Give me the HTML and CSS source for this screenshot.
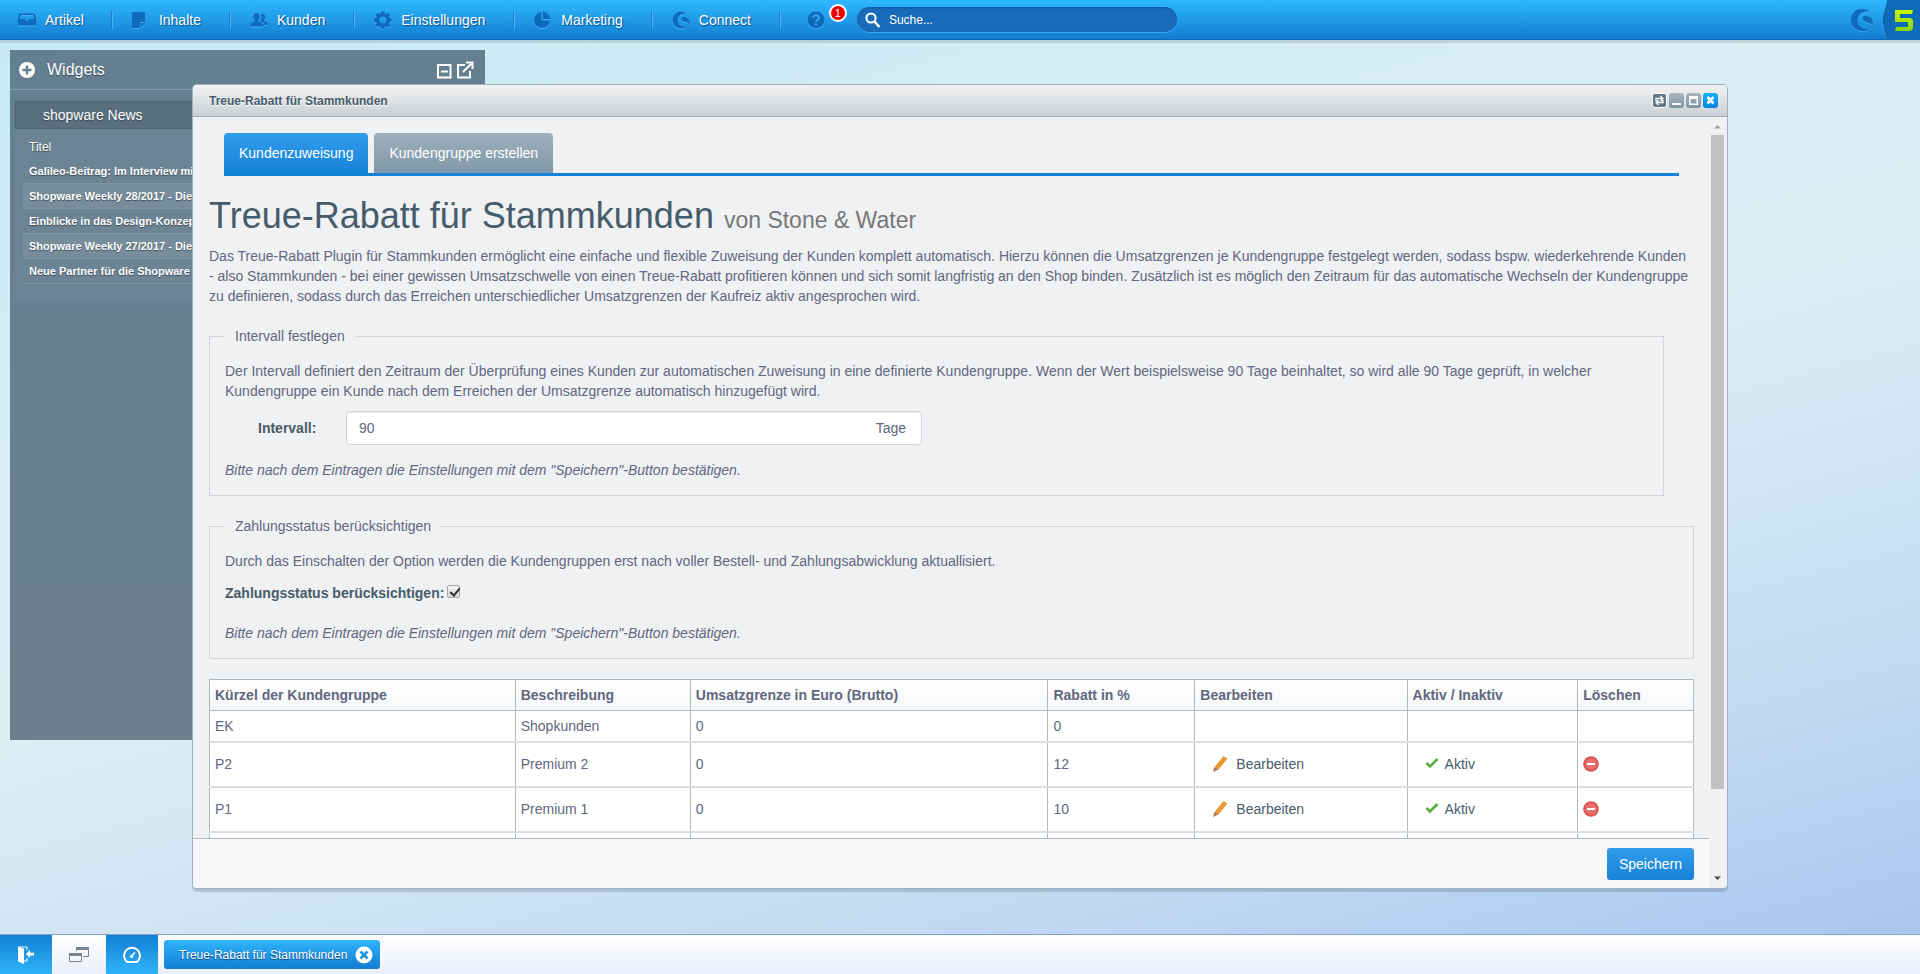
FILE: index.html
```html
<!DOCTYPE html>
<html lang="de">
<head>
<meta charset="utf-8">
<title>Treue-Rabatt für Stammkunden</title>
<link rel="stylesheet" href="styles.css">
</head>
<body>
<header class="topbar">
  <nav class="menu" aria-label="Hauptmenü">
    <a class="menu-item" href="#artikel">
      <svg class="menu-icon" viewBox="0 0 18 18"><path d="M2.500 2.500h13q1.500 0 2 2L18 9v5.500H0V9l.5-4.500q.5-2 2-2zM2.800 4L2 8h4.200q.8 0 1 1t1 1h1.600q.8 0 1-1t1-1H16l-.8-4z" fill-rule="evenodd"/></svg>
      <span>Artikel</span></a>
    <a class="menu-item" href="#inhalte">
      <svg class="menu-icon" viewBox="0 0 18 18"><path d="M0 1h13v10H8v6H0z"/><path d="M9 12h4l-4 4.500z"/></svg>
      <span>Inhalte</span></a>
    <a class="menu-item" href="#kunden">
      <svg class="menu-icon" viewBox="0 0 18 18"><path d="M6.500 2c2 0 3.200 1.500 3.200 3.700 0 1.500-.6 2.600-1.400 3.400v1.400l4.200 1.900c.6.300.9.800.9 1.600v1.500H0V14c0-.8.300-1.300.9-1.600l3.800-1.900V9.100C3.900 8.300 3.300 7.200 3.300 5.700 3.300 3.500 4.500 2 6.500 2z"/><path d="M12.500 3c1.800 0 2.800 1.200 2.800 3 0 1.300-.5 2.200-1.200 2.900v1.200l3 1.500c.6.300.9.700.9 1.400v1h-3.300c-.1-1.200-.6-1.900-1.600-2.300l-2.500-1.200V9.400c.6-.9.900-2.100.9-3.500 0-1.100-.2-1.900-.5-2.600.4-.2.900-.3 1.500-.3z"/></svg>
      <span>Kunden</span></a>
    <a class="menu-item" href="#einstellungen">
      <svg class="menu-icon" viewBox="0 0 18 18"><path fill-rule="evenodd" d="M7.200.5h3.300l.4 2 1.200.5 1.800-1.200 2.300 2.300L15 5.900l.5 1.200 2 .4v3.200l-2 .4-.5 1.200 1.200 1.800-2.300 2.300-1.800-1.200-1.200.5-.4 2H7.200l-.4-2-1.200-.5-1.800 1.200-2.300-2.300 1.200-1.800-.5-1.200-2-.4V7.500l2-.4.500-1.200-1.200-1.800 2.300-2.300L5.600 3l1.200-.5zM8.900 5.700a3.400 3.400 0 100 6.800 3.400 3.400 0 000-6.800z"/></svg>
      <span>Einstellungen</span></a>
    <a class="menu-item" href="#marketing">
      <svg class="menu-icon" viewBox="0 0 18 18"><path d="M7.500 1v8.500H16A8 8 0 117.500 1z"/><path d="M9 .8A7.600 7.600 0 0116.300 8H9z"/></svg>
      <span>Marketing</span></a>
    <a class="menu-item" href="#connect">
      <svg class="menu-icon" viewBox="0 0 24 24"><path d="M20 3.500C17 1.300 14 .8 11 1 5 1.500 1 6 1 12s5 11.200 11.500 11.200c2.400 0 4.600-.6 6.500-2-6 1-11.500-2.700-11.500-8.600C7.500 6.500 13 2.500 20 3.500z"/><path d="M13 8.500c4-1.500 10 .5 10 7v2c-1.500-2-3.500-2.300-5.500-3-3-1-6-2.500-4.500-6z"/></svg>
      <span>Connect</span></a>
    <a class="menu-item menu-help" href="#hilfe" aria-label="Hilfe">
      <svg class="menu-icon" viewBox="0 0 18 18"><circle cx="9" cy="9" r="8.500"/><path d="M6 6.800C6 3.500 12 3.600 12 6.800c0 2-3 2.200-3 4.200M9 12.500v2" fill="none" stroke="#38a5ea" stroke-width="2"/></svg>
      <span class="badge">1</span></a>
  </nav>
  <label class="search">
    <svg class="search-icon" viewBox="0 0 16 16"><circle cx="6" cy="6" r="4.600" fill="none" stroke="currentColor" stroke-width="2"/><path d="M9.500 9.500l5 5.500" stroke="currentColor" stroke-width="2.400"/></svg>
    <input class="search-input" type="text" placeholder="Suche..." aria-label="Suche">
  </label>
  <div class="brand">
    <svg class="brand-mark" viewBox="0 0 24 24"><path d="M20 3.500C17 1.300 14 .8 11 1 5 1.500 1 6 1 12s5 11.200 11.500 11.200c2.400 0 4.600-.6 6.500-2-6 1-11.500-2.700-11.500-8.600C7.500 6.500 13 2.500 20 3.500z"/><path d="M13 8.500c4-1.500 10 .5 10 7v2c-1.500-2-3.500-2.300-5.500-3-3-1-6-2.500-4.500-6z"/></svg>
    <svg class="brand-version" viewBox="0 0 37 39" role="img" aria-label="Version 5">
      <defs><linearGradient id="lime" x1="0" y1="0" x2="0" y2="1"><stop offset="0" stop-color="#c8fb00"/><stop offset="1" stop-color="#86d400"/></linearGradient></defs>
      <path d="M5 0h32v39H5L0 20z" fill="#0f6ab8"/><path d="M5 0L0 20l5 19" fill="none" stroke="#0b5aa3"/>
      <path d="M12 10h18l-1 4H17v4h9q4 0 4 3v6q0 4-4 4H12l1-4h12v-5H12z" fill="url(#lime)"/>
    </svg>
  </div>
</header>

<main class="desktop">
  <aside class="widgets">
    <div class="widgets-head">
      <button class="plain" type="button" aria-label="Widget hinzufügen"><svg class="icon-16" viewBox="0 0 16 16"><circle cx="8" cy="8" r="8" fill="#fff"/><path d="M8 3.500v9M3.500 8h9" stroke="#647f8f" stroke-width="2.400"/></svg></button>
      <h2 class="widgets-title">Widgets</h2>
      <button class="plain" type="button" aria-label="Minimieren"><svg class="icon-tool" viewBox="0 0 18 18"><path d="M3 4h12.500v12.500H3zM6 10.500h7" fill="none" stroke="#fff" stroke-width="2"/></svg></button>
      <button class="plain" type="button" aria-label="Lösen"><svg class="icon-tool" viewBox="0 0 18 18"><path d="M9 4H2v12.500h12V10M7 11l8-8M10 1.500h6.500V8" fill="none" stroke="#fff" stroke-width="2"/></svg></button>
    </div>
    <section class="news">
      <h3 class="news-title">shopware News</h3>
      <div class="news-body">
        <div class="news-label">Titel</div>
        <ul class="news-list">
          <li>Galileo-Beitrag: Im Interview mit</li>
          <li>Shopware Weekly 28/2017 - Die</li>
          <li>Einblicke in das Design-Konzept</li>
          <li>Shopware Weekly 27/2017 - Die</li>
          <li>Neue Partner für die Shopware</li>
        </ul>
      </div>
    </section>
  </aside>

  <section class="window">
    <div class="window-head">
      <h2 class="window-title">Treue-Rabatt für Stammkunden</h2>
      <button class="tool tool-refresh" type="button" aria-label="Neu laden"><svg viewBox="0 0 13 13"><path d="M3 7V4.500h6M7.500 2l2.500 2.500L7.500 7M10 6v2.500H4M5.500 6L3 8.500 5.500 11" fill="none" stroke="#fff" stroke-width="1.300"/></svg></button>
      <button class="tool" type="button" aria-label="Minimieren"><svg viewBox="0 0 15 15"><path d="M3 10h9v2H3z" fill="#fff"/></svg></button>
      <button class="tool" type="button" aria-label="Maximieren"><svg viewBox="0 0 15 15"><path d="M3 3h9v9H3zM4.500 6v4.500h6V6z" fill="#fff" fill-rule="evenodd"/></svg></button>
      <button class="tool tool-close" type="button" aria-label="Schließen"><svg viewBox="0 0 15 15"><path d="M4.500 4l6 6.500M10.500 4l-6 6.500" stroke="#fff" stroke-width="2.600"/></svg></button>
    </div>
    <div class="window-body">
      <div class="pane">
        <div class="content">
          <nav class="tabs">
            <a class="tab tab-active" href="#zuweisung">Kundenzuweisung</a>
            <a class="tab" href="#gruppe">Kundengruppe erstellen</a>
          </nav>
          <h1 class="headline">Treue-Rabatt für Stammkunden <small>von Stone &amp; Water</small></h1>
          <p class="text">Das Treue-Rabatt Plugin für Stammkunden ermöglicht eine einfache und flexible Zuweisung der Kunden komplett automatisch. Hierzu können die Umsatzgrenzen je Kundengruppe festgelegt werden, sodass bspw. wiederkehrende Kunden - also Stammkunden - bei einer gewissen Umsatzschwelle von einen Treue-Rabatt profitieren können und sich somit langfristig an den Shop binden. Zusätzlich ist es möglich den Zeitraum für das automatische Wechseln der Kundengruppe zu definieren, sodass durch das Erreichen unterschiedlicher Umsatzgrenzen der Kaufreiz aktiv angesprochen wird.</p>

          <fieldset class="group group-narrow">
            <legend>Intervall festlegen</legend>
            <p class="text">Der Intervall definiert den Zeitraum der Überprüfung eines Kunden zur automatischen Zuweisung in eine definierte Kundengruppe. Wenn der Wert beispielsweise 90 Tage beinhaltet, so wird alle 90 Tage geprüft, in welcher Kundengruppe ein Kunde nach dem Erreichen der Umsatzgrenze automatisch hinzugefügt wird.</p>
            <div class="interval">
              <label class="strong interval-label" for="interval">Intervall:</label>
              <div class="interval-box">
                <input class="interval-input" id="interval" type="text" value="90">
                <span class="interval-unit">Tage</span>
              </div>
            </div>
            <p class="text hint">Bitte nach dem Eintragen die Einstellungen mit dem "Speichern"-Button bestätigen.</p>
          </fieldset>

          <fieldset class="group">
            <legend>Zahlungsstatus berücksichtigen</legend>
            <p class="text">Durch das Einschalten der Option werden die Kundengruppen erst nach voller Bestell- und Zahlungsabwicklung aktuallisiert.</p>
            <div class="status">
              <label class="strong" for="status">Zahlungsstatus berücksichtigen:</label>
              <input class="check" id="status" type="checkbox" checked>
            </div>
            <p class="text hint">Bitte nach dem Eintragen die Einstellungen mit dem "Speichern"-Button bestätigen.</p>
          </fieldset>

          <table class="grid">
            <colgroup><col class="c-key"><col class="c-desc"><col class="c-limit"><col class="c-rate"><col class="c-edit"><col class="c-active"><col class="c-del"></colgroup>
            <thead>
              <tr><th>Kürzel der Kundengruppe</th><th>Beschreibung</th><th>Umsatzgrenze in Euro (Brutto)</th><th>Rabatt in %</th><th>Bearbeiten</th><th>Aktiv / Inaktiv</th><th>Löschen</th></tr>
            </thead>
            <tbody>
              <tr><td>EK</td><td>Shopkunden</td><td>0</td><td>0</td><td></td><td></td><td></td></tr>
              <tr class="tall"><td>P2</td><td>Premium 2</td><td>0</td><td>12</td>
                <td><button class="action" type="button"><svg class="icon-16" viewBox="0 0 16 16"><path d="M11.500 0l4 2.500-9 11-4-2.500z" fill="#eb9a33"/><path d="M2.500 11l4 2.500L1 16z" fill="#a8745c"/></svg><span>Bearbeiten</span></button></td>
                <td><button class="action action-check" type="button"><svg class="icon-14" viewBox="0 0 14 14"><path d="M1.500 6l3.500 3.500L12.500 2" fill="none" stroke="#53b03c" stroke-width="2.600"/></svg><span>Aktiv</span></button></td>
                <td><button class="plain delete" type="button" aria-label="Löschen"><svg class="icon-16" viewBox="0 0 16 16"><circle cx="8" cy="8" r="7.800" fill="#dd5553"/><circle cx="8" cy="8" r="5.800" fill="#e8706e"/><path d="M4 7h8v2H4z" fill="#fff"/></svg></button></td></tr>
              <tr class="tall"><td>P1</td><td>Premium 1</td><td>0</td><td>10</td>
                <td><button class="action" type="button"><svg class="icon-16" viewBox="0 0 16 16"><path d="M11.500 0l4 2.500-9 11-4-2.500z" fill="#eb9a33"/><path d="M2.500 11l4 2.500L1 16z" fill="#a8745c"/></svg><span>Bearbeiten</span></button></td>
                <td><button class="action action-check" type="button"><svg class="icon-14" viewBox="0 0 14 14"><path d="M1.500 6l3.500 3.500L12.500 2" fill="none" stroke="#53b03c" stroke-width="2.600"/></svg><span>Aktiv</span></button></td>
                <td><button class="plain delete" type="button" aria-label="Löschen"><svg class="icon-16" viewBox="0 0 16 16"><circle cx="8" cy="8" r="7.800" fill="#dd5553"/><circle cx="8" cy="8" r="5.800" fill="#e8706e"/><path d="M4 7h8v2H4z" fill="#fff"/></svg></button></td></tr>
              <tr class="tall"><td></td><td></td><td></td><td></td><td></td><td></td><td></td></tr>
            </tbody>
          </table>
        </div>
        <div class="footer"><button class="save" type="button">Speichern</button></div>
      </div>
      <div class="scrollbar">
        <svg class="scroll-arrow" viewBox="0 0 17 17"><path d="M5 10.500h7L8.500 7z" fill="#a3a3a3"/></svg>
        <div class="scroll-track"><div class="scroll-thumb"></div></div>
        <svg class="scroll-arrow" viewBox="0 0 17 17"><path d="M5 6.500h7L8.500 10z" fill="#505050"/></svg>
      </div>
    </div>
  </section>
</main>

<footer class="taskbar">
  <button class="dock dock-blue" type="button" aria-label="Abmelden"><svg class="icon-18" viewBox="0 0 18 18"><path d="M1 1h9v3M10 12v3H6" fill="none" stroke="#fff"/><path d="M1 1l6 1.500V18l-6-2.500zM9 8l4-4v2.800h4v2.600h-4V12z" fill="#fff"/></svg></button>
  <button class="dock" type="button" aria-label="Fenster"><svg class="icon-20" viewBox="0 0 20 18"><path d="M7.500 5V1.500h12v9H14" fill="none" stroke="#788591"/><path d="M7 1h13v3H7zM0 7h13v3H0z" fill="#788591"/><path d="M.5 7.500h12v8H.5z" fill="none" stroke="#788591"/></svg></button>
  <button class="dock dock-blue" type="button" aria-label="Widgets"><svg class="icon-20" viewBox="0 0 20 18"><path d="M4.500 15.500a8 8 0 1111 0q-.5.500-1.500.5H6q-1 0-1.500-.5z" fill="none" stroke="#fff" stroke-width="2"/><path d="M9 10.500L13 6.500" stroke="#fff" stroke-width="1.600"/><circle cx="9.500" cy="10.500" r="1.600" fill="#fff"/></svg></button>
  <button class="task" type="button"><span>Treue-Rabatt für Stammkunden</span>
    <svg class="icon-18" viewBox="0 0 18 18"><circle cx="9" cy="9" r="8.500" fill="#fff"/><path d="M5.500 5.500l7 7M12.500 5.500l-7 7" stroke="#1f93df" stroke-width="2.600"/></svg></button>
</footer>
</body>
</html>
```

FILE: styles.css
```css
:root {
  --blue: #1583d8;
  --slate: #475c6a;
  --ink: #61677f;
  --line: #acb9c5;
}

* { box-sizing: border-box; }

body {
  margin: 0;
  height: 100vh;
  display: flex;
  flex-direction: column;
  overflow: hidden;
  font: 14px/20px "Liberation Sans", Arial, sans-serif;
  color: var(--ink);
  background: linear-gradient(165deg, #c3e9f4 0%, #daeef6 33%, #dbeff5 50%, #d4e7f4 61%, #cbe1f1 70%, #c3daf1 79%, #b0ccf0 92%, #a8c4ee 100%);
}

h1, h2, h3, p, ul { margin: 0; padding: 0; font-weight: normal; }
ul { list-style: none; }
button, input { font: inherit; color: inherit; }
button { cursor: pointer; }
svg { display: block; flex: none; }
a { color: inherit; text-decoration: none; }

.plain { padding: 0; border: 0; background: none; }
.icon-14 { width: 14px; height: 14px; }
.icon-16 { width: 16px; height: 16px; }
.icon-18 { width: 18px; height: 18px; }
.icon-20 { width: 20px; height: 18px; }
.icon-tool { width: 18px; height: 18px; }

/* top menu */
.topbar {
  display: flex;
  align-items: center;
  height: 40px;
  flex: none;
  border-bottom: 1px solid #0b66b4;
  background: linear-gradient(#2fb8fd, #137dd1);
  box-shadow: 0 3px 0 rgba(140, 150, 150, .3);
}
.menu { display: flex; align-items: center; }
.menu-item {
  display: flex;
  align-items: center;
  gap: 9px;
  height: 18px;
  padding: 0 29px 0 19px;
  border-right: 1px solid #4bb4f5;
  box-shadow: inset -1px 0 0 #1a7cc8;
  color: #fff;
  text-shadow: 1px 1px 1px rgba(0, 50, 110, .7);
}
.menu-item:first-child { padding: 0 28px 0 18px; }
.menu-icon { width: 18px; height: 18px; fill: #0f6abb; filter: drop-shadow(0 1px 0 #3fb0f8); }
.menu-help { position: relative; padding: 0 32px 0 26px; border: 0; box-shadow: none; }
.badge {
  position: absolute;
  left: 48px;
  top: -7px;
  width: 18px;
  height: 18px;
  border: 2px solid #fff;
  border-radius: 9px;
  background: #f00000;
  font-size: 11px;
  line-height: 14px;
  text-align: center;
  text-shadow: none;
}
.search {
  display: flex;
  align-items: center;
  gap: 8px;
  width: 320px;
  height: 25px;
  padding: 0 8px;
  border-radius: 13px;
  background: #186cb9;
  box-shadow: 0 1px 0 #3ea9f2, inset 0 1px 2px #0d5aa3;
  color: #fff;
}
.search-icon { width: 16px; height: 16px; }
.search-input { flex: 1; min-width: 0; padding: 0; border: 0; outline: 0; background: none; font-size: 12px; }
.search-input::placeholder { color: #fff; opacity: 1; }
.brand { display: flex; align-items: center; gap: 9px; margin-left: auto; }
.brand-mark { width: 24px; height: 24px; fill: #0f6abb; filter: drop-shadow(0 1px 0 #3fa6ee); }
.brand-version { width: 37px; height: 39px; }

/* desktop */
.desktop { position: relative; flex: 1; min-height: 0; }
.widgets {
  position: absolute;
  top: 10px;
  bottom: 194px;
  left: 10px;
  width: 475px;
  background: linear-gradient(#647f8f, #6d808d);
  color: #fff;
  text-shadow: 0 1px 1px rgba(40, 50, 60, .7);
}
.widgets-head {
  display: flex;
  align-items: center;
  gap: 3px;
  height: 40px;
  padding: 0 11px 0 9px;
  border-bottom: 1px solid #8299a6;
}
.widgets-title { flex: 1; padding-left: 9px; font-size: 16px; }
.news { margin: 11px 5px 0; }
.news-title {
  height: 28px;
  padding: 0 27px;
  border: 1px solid #4d626f;
  background: #5a6f7d;
  font-size: 14px;
  line-height: 26px;
}
.news-body { padding: 6px 8px 17px; background: #6d8494; }
.news-label { padding: 2px 6px; font-size: 12px; }
.news-list li {
  height: 25px;
  padding: 0 6px;
  border-bottom: 1px solid #8094a1;
  font-size: 11px;
  font-weight: bold;
  line-height: 25px;
  white-space: nowrap;
}
.news-list li:nth-child(even) { background: #788d9b; }

/* application window */
.window {
  position: absolute;
  top: 44px;
  bottom: 45px;
  left: 10%;
  right: 10%;
  display: flex;
  flex-direction: column;
  border: 1px solid #9fb1c1;
  border-radius: 5px;
  overflow: hidden;
  background: #f0f1f3;
  box-shadow: 0 3px 0 rgba(80, 100, 120, .25);
}
.window-head {
  display: flex;
  align-items: center;
  gap: 2px;
  height: 32px;
  flex: none;
  padding: 0 9px 0 16px;
  border-bottom: 1px solid #9fb1c1;
  background: linear-gradient(#f2f2f2, #dfe2e4 50%, #c9d0d6);
}
.window-title { flex: 1; color: var(--slate); font-size: 12px; font-weight: bold; text-shadow: 0 1px 0 #fff; }
.tool {
  width: 15px;
  height: 15px;
  padding: 0;
  border: 0;
  border-radius: 3px;
  background: linear-gradient(#a9b7c1, #7c92a2);
}
.tool-refresh { width: 13px; height: 13px; margin-right: 1px; border-radius: 2px; background: #647786; box-shadow: 0 0 0 1px #f5f7f8; }
.tool-close { background: linear-gradient(#18b0fb, #0681d8); }
.window-body { display: flex; flex: 1; min-height: 0; }
.pane { display: flex; flex: 1; flex-direction: column; min-width: 0; }
.content { flex: 1; min-height: 0; padding: 16px 15px 0 16px; overflow: hidden; }

.tabs {
  display: flex;
  align-items: flex-start;
  gap: 6px;
  height: 43px;
  margin: 0 15px;
  border-bottom: 3px solid var(--blue);
}
.tab {
  height: 40px;
  padding: 0 15px;
  border-radius: 4px 4px 0 0;
  background: linear-gradient(#9dafbb, #8198a8);
  color: #fff;
  line-height: 40px;
}
.tab-active { background: linear-gradient(#329ceb, var(--blue)); }

.headline { margin: 20px 0 6px; color: var(--slate); font-size: 36px; line-height: 40px; }
.headline small { color: #777; font-size: 23px; }

.group { min-width: 0; margin: 20px 0 0; padding: 15px; border: 1px solid #d1d5da; }
.group-narrow { margin-right: 30px; }
.group legend { padding: 0 10px; }
.hint { margin-top: 15px; font-style: italic; }
.strong { color: var(--slate); font-weight: bold; }

.interval { display: flex; align-items: center; margin: 10px 0 0 33px; }
.interval-label { width: 88px; }
.interval-box {
  display: flex;
  align-items: center;
  width: 576px;
  height: 34px;
  padding: 0 15px 0 12px;
  border: 1px solid #cdd4dc;
  border-radius: 4px;
  background: #fff;
  box-shadow: inset 0 1px 1px rgba(0, 0, 0, .08);
}
.interval-input { flex: 1; min-width: 0; padding: 0; border: 0; outline: 0; background: none; }

.status { display: flex; align-items: center; gap: 3px; margin: 12px 0 20px; }
.check {
  appearance: none;
  width: 13px;
  height: 13px;
  margin: 0 0 4px;
  border: 1px solid #a6a6a6;
  border-radius: 2px;
  background: linear-gradient(#f2f2f2, #dadada);
}
.check:checked::before {
  content: "";
  display: block;
  width: 4px;
  height: 8px;
  margin: 0 0 0 4px;
  border: solid #333;
  border-width: 0 2px 2px 0;
  transform: rotate(40deg);
}

.grid { width: 100%; margin-top: 20px; border-collapse: collapse; table-layout: fixed; background: #fff; }
.c-key { width: 20.6%; }
.c-desc { width: 11.8%; }
.c-limit { width: 24.1%; }
.c-rate { width: 9.9%; }
.c-edit { width: 14.3%; }
.c-active { width: 11.5%; }
.c-del { width: 7.8%; }
.grid th, .grid td { height: 31px; padding: 0 5px; border: 1px solid var(--line); text-align: left; }
.grid th { background: linear-gradient(#fff, #f6f7f8); }
.grid td { border-bottom: 2px solid #ddd; }
.grid .tall td { height: 45px; }
.action { display: flex; align-items: center; gap: 8px; padding: 0 12px; border: 0; background: none; color: var(--slate); }
.action-check { gap: 6px; }
.delete { display: block; }

.footer {
  display: flex;
  align-items: center;
  justify-content: flex-end;
  height: 50px;
  flex: none;
  padding: 0 15px;
  border-top: 1px solid var(--line);
  background: #f8f8f8;
}
.save {
  height: 32px;
  padding: 0 12px;
  border: 0;
  border-radius: 3px;
  background: linear-gradient(#329ceb, var(--blue));
  color: #fff;
}

.scrollbar { display: flex; flex-direction: column; width: 18px; flex: none; padding: 1px 0; background: #f1f1f1; }
.scroll-arrow { width: 17px; height: 17px; }
.scroll-track { flex: 1; padding: 0 3px 0 2px; }
.scroll-thumb { height: 89%; background: #c1c1c1; }

/* taskbar */
.taskbar {
  display: flex;
  align-items: center;
  height: 40px;
  flex: none;
  border-top: 1px solid #84a5cb;
  background: linear-gradient(#fff, #e9effb);
}
.dock {
  display: flex;
  align-items: center;
  justify-content: center;
  width: 54px;
  height: 39px;
  padding: 0;
  border: 0;
  background: none;
}
.dock-blue { width: 52px; background: linear-gradient(#147fd3, #2eb4fa); }
.task {
  display: flex;
  align-items: center;
  gap: 8px;
  height: 29px;
  margin-left: 6px;
  padding: 0 7px 0 15px;
  border: 0;
  border-radius: 3px;
  background: linear-gradient(#2eb5fb, #137dd2);
  color: #fff;
  font-size: 12px;
  text-shadow: 0 1px 1px rgba(0, 40, 90, .7);
}
```
